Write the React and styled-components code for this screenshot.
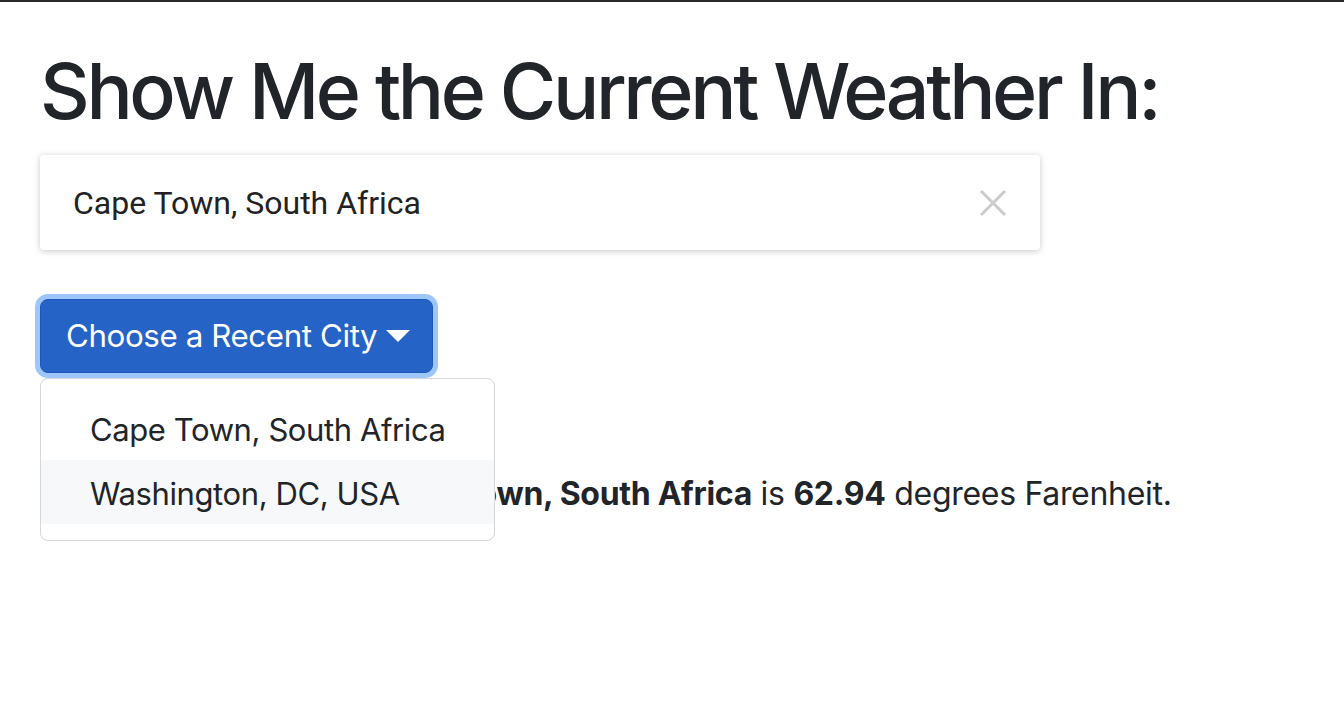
import React, { useState } from "react";
import styled, { createGlobalStyle } from "styled-components";

const GlobalStyle = createGlobalStyle`
  html, body { margin: 0; padding: 0; background: #fff; }
  body {
    border-top: 2px solid #2a2a2a;
    font-family: Inter, "Liberation Sans", sans-serif;
    color: #212529;
  }
`;

const Page = styled.div`
  min-height: 700px;
  padding: 41px 40px 0 40px;
`;

const Title = styled.h1`
  margin: 0 0 16px 0;
  font-size: 77px;
  font-weight: 500;
  line-height: 96px;
  letter-spacing: -3.35px;
`;

const SearchBox = styled.div`
  width: 1000px;
  height: 95px;
  box-sizing: border-box;
  display: flex;
  align-items: center;
  padding: 0 32px 0 33px;
  border-radius: 4px;
  background: #fff;
  box-shadow: 0 1px 6px rgba(0, 0, 0, 0.22);
`;

const SearchInput = styled.input`
  flex: 1;
  border: 0;
  outline: none;
  font-family: Roboto, sans-serif;
  font-size: 32px;
  color: #222;
  padding: 0;
  background: transparent;
`;

const ClearButton = styled.button`
  border: 0;
  background: none;
  padding: 0;
  width: 30px;
  height: 30px;
  display: flex;
  align-items: center;
  justify-content: center;
  cursor: pointer;
`;

const DropdownWrap = styled.div`
  position: relative;
  display: inline-block;
  margin-top: 49px;
  margin-bottom: 97px;
`;

const ToggleButton = styled.button`
  font-family: Inter, "Liberation Sans", sans-serif;
  font-size: 31.3px;
  line-height: 48px;
  padding: 12px 22px 12px 25px;
  border: 1px solid #1f58b6;
  border-radius: 8px;
  background: #2563c6;
  color: #fff;
  box-shadow: 0 0 0 5px #9dc6fa;
  display: flex;
  align-items: center;
  letter-spacing: -0.4px;
  cursor: pointer;
`;

const Caret = styled.span`
  display: inline-block;
  margin-left: 9px;
  width: 0;
  height: 0;
  border-top: 12px solid #fff;
  border-left: 12px solid transparent;
  border-right: 12px solid transparent;
`;

const Menu = styled.div`
  position: absolute;
  top: 100%;
  left: 0;
  margin-top: 5px;
  width: 455px;
  box-sizing: border-box;
  padding: 17px 0 16px;
  background: #fff;
  border: 1px solid #d5d6d8;
  border-radius: 8px;
  z-index: 10;
`;

const MenuItem = styled.div`
  padding: 10px 48px 6px 49px;
  font-size: 31px;
  line-height: 48px;
  letter-spacing: -0.4px;
  color: #212529;
  background: ${(p) => (p.$active ? "#f7f8fa" : "transparent")};
  white-space: nowrap;
`;

const Result = styled.p`
  margin: 0;
  font-size: 32px;
  line-height: 48px;
  letter-spacing: -0.3px;
`;

const cities = ["Cape Town, South Africa", "Washington, DC, USA"];

export default function App() {
  const [city, setCity] = useState("Cape Town, South Africa");

  return (
    <Page>
      <GlobalStyle />
      <Title>Show Me the Current Weather In:</Title>
      <SearchBox>
        <SearchInput value={city} onChange={(e) => setCity(e.target.value)} />
        <ClearButton aria-label="clear" onClick={() => setCity("")}>
          <svg width="28" height="28" viewBox="0 0 28 28">
            <path d="M2 2 L26 26 M26 2 L2 26" stroke="#cccccc" strokeWidth="3" />
          </svg>
        </ClearButton>
      </SearchBox>
      <DropdownWrap>
        <ToggleButton>
          Choose a Recent City
          <Caret />
        </ToggleButton>
        <Menu>
          {cities.map((c, i) => (
            <MenuItem key={c} $active={i === 1}>{c}</MenuItem>
          ))}
        </Menu>
      </DropdownWrap>
      <Result>
        The temperature near <b>Cape Town, South Africa</b> is <b>62.94</b> degrees Farenheit.
      </Result>
    </Page>
  );
}
